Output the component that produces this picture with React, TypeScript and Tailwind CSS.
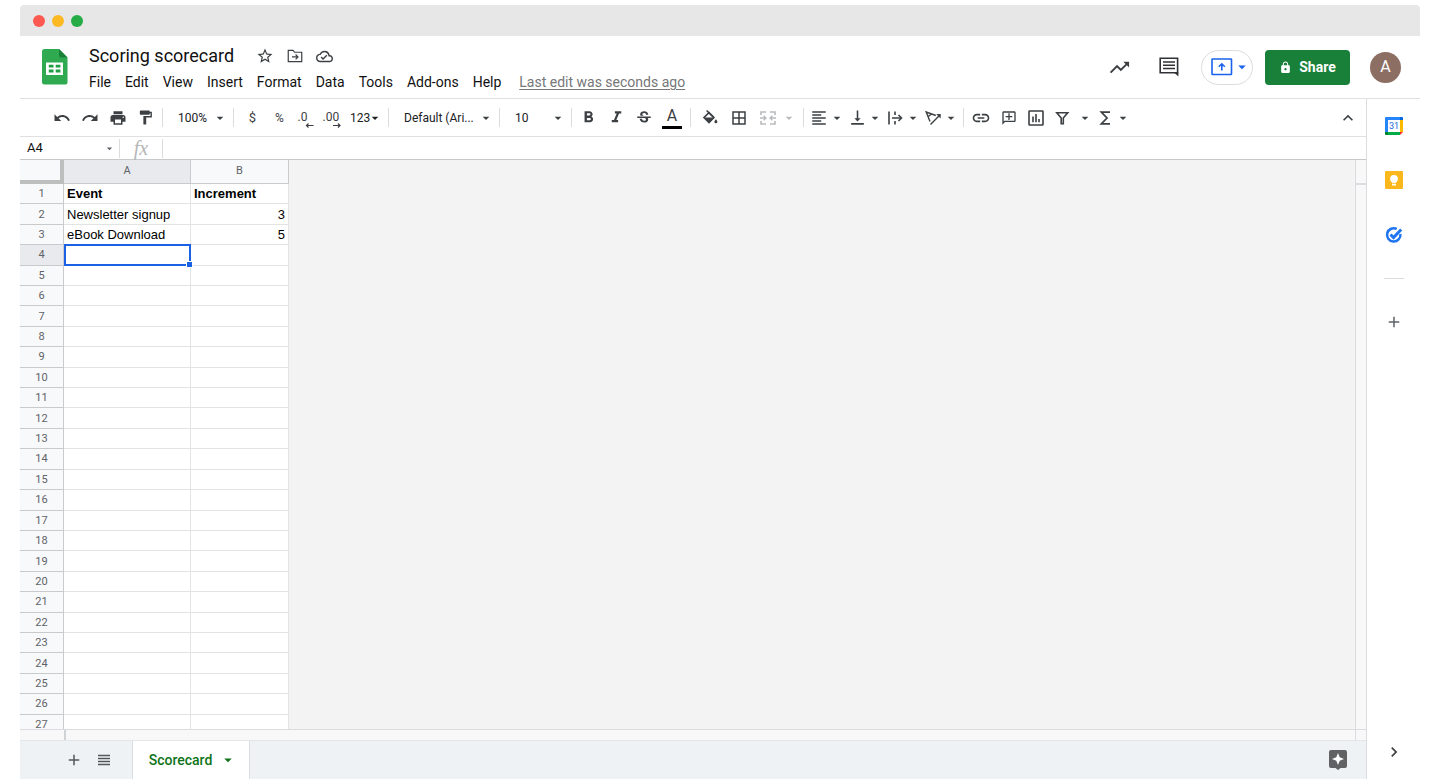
import React, { useState } from "react";
import {
  MdAdd,
  MdArrowDropDown,
  MdBorderAll,
  MdChevronRight,
  MdExpandLess,
  MdFormatAlignLeft,
  MdFormatBold,
  MdFormatItalic,
  MdFormatPaint,
  MdLink,
  MdLock,
  MdOutlineAddComment,
  MdOutlineCloudDone,
  MdPrint,
  MdRedo,
  MdStarBorder,
  MdStrikethroughS,
  MdTrendingUp,
  MdUndo,
  MdVerticalAlignBottom,
} from "react-icons/md";

const menus = ["File", "Edit", "View", "Insert", "Format", "Data", "Tools", "Add-ons", "Help"];

const cells: Record<number, [string, string]> = {
  1: ["Event", "Increment"],
  2: ["Newsletter signup", "3"],
  3: ["eBook Download", "5"],
};

const rows = Array.from({ length: 27 }, (_, i) => i + 1);
const selectedRow = 4;

const SheetsLogo = () => (
  <svg viewBox="0 0 26 36" className="h-9 w-[26px]" aria-hidden="true">
    <path d="M2.5 0H17l8.500 8.500v25a2 2 0 0 1-2 2h-21a2.500 2.500 0 0 1-2.500-2.500V2.500A2.500 2.500 0 0 1 2.500 0Z" fill="#2faa50" />
    <path d="M17 0l8.500 8.500h-6.500A2 2 0 0 1 17 6.500Z" fill="#188038" />
    <path d="M4 13.500h17v12.500H4Z" fill="#fff" />
    <path d="M6.800 15.800h4.700v2.800H6.800Zm6.900 0h4.700v2.800h-4.700ZM6.800 20.600h4.700v2.900H6.800Zm6.900 0h4.700v2.900h-4.700Z" fill="#1f9d44" />
  </svg>
);

const MoveIcon = () => (
  <svg viewBox="0 0 24 24" className="size-[18px]" fill="none" stroke="currentColor" strokeWidth="1.600" aria-hidden="true">
    <path d="M3 19.500V4.500h6.500l2 2.500H21v12.500Z" />
    <path d="M8 13.200h7.500M12.800 10l3.200 3.200-3.200 3.200" />
  </svg>
);

const CommentIcon = () => (
  <svg viewBox="0 0 20 20" className="size-5" fill="none" stroke="currentColor" strokeWidth="1.600" aria-hidden="true">
    <path d="M1.200 1.200h17.400v14.600H1.200Z" />
    <path d="M15 15.500h4.400V19.600Z" fill="currentColor" stroke="none" />
    <path d="M4 5h12M4 8.300h12M4 11.600h12" strokeWidth="1.500" />
  </svg>
);

const PresentIcon = () => (
  <svg viewBox="0 0 22 18" className="h-[18px] w-[22px]" fill="none" stroke="currentColor" aria-hidden="true">
    <rect x="1" y="1" width="19.500" height="15.500" rx="0.500" strokeWidth="1.600" />
    <path d="M10.800 12.500V6M7.800 8.800L10.800 5.800l3 3" strokeWidth="1.600" />
  </svg>
);

const FillIcon = () => (
  <svg viewBox="0 0 18 18" className="size-[18px]" aria-hidden="true">
    <path d="M5.600 1.500l6.600 6.400" fill="none" stroke="currentColor" strokeWidth="1.500" />
    <path d="M8 3.600l5 5L8 13.700 2.900 8.600Z" fill="none" stroke="currentColor" strokeWidth="1.500" />
    <path d="M2.600 8.500h10.700L8 13.900Z" fill="currentColor" />
    <path d="M14.900 10.200c.9 1.200 1.500 1.900 1.500 2.600a1.500 1.500 0 0 1-3 0c0-.7.6-1.400 1.500-2.600Z" fill="currentColor" />
  </svg>
);

const MergeIcon = () => (
  <svg viewBox="0 0 18 18" className="size-[18px]" fill="none" stroke="currentColor" strokeWidth="1.600" aria-hidden="true">
    <path d="M2 6V3h5M11 3h5v3M2 12v3h5M11 15h5v-3" />
    <path d="M1 9h5.500M4.700 6.800L6.900 9l-2.200 2.200M17 9h-5.500M13.300 6.800L11.100 9l2.200 2.200" strokeWidth="1.400" />
  </svg>
);

const WrapIcon = () => (
  <svg viewBox="0 0 18 18" className="size-[18px]" fill="none" stroke="currentColor" strokeWidth="1.600" aria-hidden="true">
    <path d="M3 2.500v13M9 2.500v3.500M9 12v3.500M6 9h9" />
    <path d="M12.500 6l3 3-3 3" />
  </svg>
);

const RotateIcon = () => (
  <svg viewBox="0 0 18 18" className="size-[18px]" fill="none" stroke="currentColor" strokeWidth="1.400" aria-hidden="true">
    <path d="M6 12.500L2.200 3l9.600 3.500M3.900 7.800L7.600 5" />
    <path d="M6.500 15.500L15.200 6.800" />
    <path d="M12.200 5h4.500v4.500Z" fill="currentColor" stroke="none" />
  </svg>
);

const ChartIcon = () => (
  <svg viewBox="0 0 18 18" className="size-[18px]" fill="none" stroke="currentColor" strokeWidth="1.600" aria-hidden="true">
    <rect x="2" y="2" width="14" height="14" rx="0.500" />
    <path d="M6 13.200V7.500M9 13.200V5M12 13.200V10" />
  </svg>
);

const FilterIcon = () => (
  <svg viewBox="0 0 18 18" className="size-[18px]" fill="none" stroke="currentColor" strokeWidth="1.600" aria-hidden="true">
    <path d="M3.800 3.800h10.900L10.300 9v5.800H8.200V9Z" />
  </svg>
);

const SigmaIcon = () => (
  <svg viewBox="0 0 18 18" className="size-[18px]" fill="none" stroke="currentColor" strokeWidth="1.700" aria-hidden="true">
    <path d="M14 3.200H5.300L11 9l-5.700 5.800H14" />
  </svg>
);

const SheetListIcon = () => (
  <svg viewBox="0 0 12 12" className="size-3" fill="none" stroke="currentColor" strokeWidth="1.700" aria-hidden="true">
    <path d="M0 1.500h12M0 4.500h12M0 7.500h12M0 10.500h12" />
  </svg>
);

const CalendarIcon = () => (
  <svg viewBox="0 0 18 18" className="size-[18px]" aria-hidden="true">
    <path d="M1 0h14v3H3v12H0V1a1 1 0 0 1 1-1Z" fill="#2684fc" />
    <path d="M15 0h2a1 1 0 0 1 1 1v2h-3Z" fill="#0066da" />
    <path d="M15 3h3v12h-3Z" fill="#ffba00" />
    <path d="M3 15h12v3H3Z" fill="#00ac47" />
    <path d="M0 15h3v3H1a1 1 0 0 1-1-1Z" fill="#00832d" />
    <path d="M15 15h3l-3 3Z" fill="#fe2c25" />
    <path d="M3 3h12v12H3Z" fill="#fff" />
    <text x="9" y="12.200" textAnchor="middle" fontSize="9" fontFamily="Roboto, sans-serif" fill="#2068dc">
      31
    </text>
  </svg>
);

const KeepIcon = () => (
  <svg viewBox="0 0 18 18" className="size-[18px]" aria-hidden="true">
    <rect width="18" height="18" rx="1" fill="#fbb81c" />
    <circle cx="9" cy="7.800" r="3.900" fill="#fff" />
    <path d="M7 9h4v2.800H7ZM7 12.700h4v1.800H7Z" fill="#fff" />
  </svg>
);

const TasksIcon = () => (
  <svg viewBox="0 0 18 18" className="size-[18px]" fill="none" aria-hidden="true">
    <path d="M11.800 2.900A6.700 6.700 0 1 0 15.400 8" stroke="#1f74f0" strokeWidth="2.500" />
    <path d="M5.500 8.500l3 3 7.700-8" stroke="#1f74f0" strokeWidth="3" />
  </svg>
);

const ExploreIcon = () => (
  <svg viewBox="0 0 18 20" className="h-5 w-[18px]" aria-hidden="true">
    <path d="M2 0h14a2 2 0 0 1 2 2v14a2 2 0 0 1-2 2h-4.500L9 20l-2.500-2H2a2 2 0 0 1-2-2V2a2 2 0 0 1 2-2Z" fill="#606264" />
    <path d="M9 3l1.700 4.300L15 9l-4.300 1.700L9 15l-1.700-4.300L3 9l4.300-1.700Z" fill="#fff" />
  </svg>
);

const Divider = () => <span className="h-[19px] w-px shrink-0 bg-[#dadce0]" />;

const Caret = () => <MdArrowDropDown className="size-4 shrink-0" />;

interface ToolProps {
  label: string;
  className?: string;
  children: React.ReactNode;
}

const Tool: React.FC<ToolProps> = ({ label, className = "w-7", children }) => (
  <button aria-label={label} className={`flex h-7 shrink-0 items-center justify-center ${className}`}>
    {children}
  </button>
);

const MenuTool: React.FC<ToolProps> = ({ label, className = "w-[38px]", children }) => (
  <button aria-label={label} className={`flex h-7 shrink-0 items-center justify-between pl-[3px] ${className}`}>
    {children}
    <Caret />
  </button>
);

interface PickerProps {
  label: string;
  options: string[];
  className: string;
}

const Picker: React.FC<PickerProps> = ({ label, options, className }) => (
  <div className={`relative flex h-7 shrink-0 items-center ${className}`}>
    <select aria-label={label} className="w-full appearance-none bg-transparent pl-[15px] text-xs text-[#202124] outline-none">
      {options.map((option) => (
        <option key={option}>{option}</option>
      ))}
    </select>
    <MdArrowDropDown className="pointer-events-none absolute right-[5px] size-4" />
  </div>
);

const TitleBar = () => (
  <div className="flex h-[31px] shrink-0 items-center gap-[7px] rounded-t-sm bg-[#e7e7e7] pl-[13px]">
    <span className="size-3 rounded-full bg-[#ff5a52]" />
    <span className="size-3 rounded-full bg-[#fdb924]" />
    <span className="size-3 rounded-full bg-[#25ac47]" />
  </div>
);

const Header = () => {
  const [title, setTitle] = useState("Scoring scorecard");

  return (
    <header className="flex h-[63px] shrink-0 items-center border-b border-[#e0e0e0] pr-[19px] pl-[22px]">
      <SheetsLogo />
      <div className="ml-[21px] flex flex-col pt-[2px]">
        <div className="flex h-7 items-center text-[#3c4043]">
          <input
            aria-label="Document name"
            value={title}
            onChange={(e) => setTitle(e.target.value)}
            className="w-[150px] text-lg text-[#111] outline-none"
          />
          <div className="ml-[17px] flex items-center gap-3">
            <button aria-label="Star"><MdStarBorder className="size-[18px]" /></button>
            <button aria-label="Move"><MoveIcon /></button>
            <button aria-label="Saved to drive"><MdOutlineCloudDone className="size-[17px]" /></button>
          </div>
        </div>
        <nav className="flex h-6 items-center gap-[14px] text-sm text-[#111]">
          {menus.map((menu) => (
            <button key={menu}>{menu}</button>
          ))}
          <a href="#history" className="ml-1 text-[#757779] underline underline-offset-2">
            Last edit was seconds ago
          </a>
        </nav>
      </div>
      <div className="ml-auto flex items-center">
        <button aria-label="Activity" className="mr-7 text-[#3c4043]"><MdTrendingUp className="size-[23px]" /></button>
        <button aria-label="Comments" className="mr-[22px] text-[#303235]">
          <CommentIcon />
        </button>
        <button
          aria-label="Present"
          className="mr-3 flex h-[35px] w-[52px] items-center justify-end border border-[#dadce0] pr-px text-[#1a62ee] rounded-full"
        >
          <PresentIcon />
          <MdArrowDropDown className="size-[18px]" />
        </button>
        <button className="mr-5 flex h-[35px] w-[85px] items-center justify-center gap-[7px] rounded bg-[#188038] text-sm font-bold text-white">
          <MdLock className="size-[13px]" />
          Share
        </button>
        <button aria-label="Account" className="size-[31px] rounded-full bg-[#8d6e63] text-base text-white">
          A
        </button>
      </div>
    </header>
  );
};

const Toolbar = () => (
  <div className="flex h-[38px] shrink-0 items-center border-b border-[#e0e0e0] pr-2 pl-7 text-[13px] text-[#3c4043]">
    <Tool label="Undo"><MdUndo className="size-[18px]" /></Tool>
    <Tool label="Redo"><MdRedo className="size-[18px]" /></Tool>
    <Tool label="Print" className="w-[27px]"><MdPrint className="size-[18px]" /></Tool>
    <Tool label="Paint format" className="mr-[3px] w-7"><MdFormatPaint className="size-[17px]" /></Tool>
    <Divider />
    <Picker label="Zoom" options={["100%", "75%", "50%"]} className="w-[70px]" />
    <Divider />
    <Tool label="Currency" className="ml-[5px] w-[27px]">$</Tool>
    <Tool label="Percent" className="w-[27px] text-xs">%</Tool>
    <Tool label="Decrease decimals" className="w-[25px]">
      <span className="flex flex-col items-start pt-[3px] text-xs leading-3">
        .0
        <svg viewBox="0 0 16 5" className="h-[5px] w-4" fill="none" stroke="currentColor" aria-hidden="true">
          <path d="M8 2.500h7.500M10.500 0.500l-2 2 2 2" strokeWidth="1.200" />
        </svg>
      </span>
    </Tool>
    <Tool label="Increase decimals" className="mr-[2px] w-[27px]">
      <span className="flex flex-col items-start pt-[3px] text-xs leading-3">
        .00
        <svg viewBox="0 0 18 5" className="h-[5px] w-[18px]" fill="none" stroke="currentColor" aria-hidden="true">
          <path d="M10 2.500h7.500M15 0.500l2 2-2 2" strokeWidth="1.200" />
        </svg>
      </span>
    </Tool>
    <button className="flex h-7 w-[41px] shrink-0 items-center pl-[3px] text-xs text-[#202124]">
      123
      <MdArrowDropDown className="-ml-[3px] size-4" />
    </button>
    <Divider />
    <Picker label="Font" options={["Default (Ari...", "Roboto"]} className="w-[110px]" />
    <Divider />
    <Picker label="Font size" options={["10", "11", "12"]} className="w-[71px]" />
    <Divider />
    <Tool label="Bold" className="ml-[2px] w-7"><MdFormatBold className="size-[19px]" /></Tool>
    <Tool label="Italic"><MdFormatItalic className="size-[19px]" /></Tool>
    <Tool label="Strikethrough"><MdStrikethroughS className="size-[18px]" /></Tool>
    <Tool label="Text color" className="mr-[4px] w-7">
      <span className="w-5 border-b-[3px] border-black text-base leading-5">A</span>
    </Tool>
    <Divider />
    <Tool label="Fill color" className="ml-[4px] w-[29px]"><FillIcon /></Tool>
    <Tool label="Borders" className="w-[29px]"><MdBorderAll className="size-[18px]" /></Tool>
    <button aria-label="Merge cells" className="mr-[2px] flex w-[48px] shrink-0 items-center gap-[4px] pl-[6px] text-[#b9bbbd]">
      <MergeIcon />
      <Caret />
    </button>
    <Divider />
    <MenuTool label="Horizontal align" className="ml-[3px] w-[38px]"><MdFormatAlignLeft className="size-[18px]" /></MenuTool>
    <MenuTool label="Vertical align"><MdVerticalAlignBottom className="size-[19px]" /></MenuTool>
    <MenuTool label="Text wrapping"><WrapIcon /></MenuTool>
    <MenuTool label="Text rotation" className="mr-[4px] w-[38px]"><RotateIcon /></MenuTool>
    <Divider />
    <Tool label="Insert link" className="ml-[3px] w-7"><MdLink className="size-5" /></Tool>
    <Tool label="Insert comment" className="w-[27px]"><MdOutlineAddComment className="size-4 -scale-x-100" /></Tool>
    <Tool label="Insert chart"><ChartIcon /></Tool>
    <MenuTool label="Filter" className="w-[43px]"><FilterIcon /></MenuTool>
    <MenuTool label="Functions"><SigmaIcon /></MenuTool>
    <Tool label="Hide menus" className="ml-auto w-5"><MdExpandLess className="size-5" /></Tool>
  </div>
);

const FormulaBar = () => {
  const [formula, setFormula] = useState("");

  return (
    <div className="flex h-[23px] shrink-0 items-center border-b border-[#c6c8ca] text-[#5f6368]">
      <input aria-label="Name box" defaultValue="A4" className="w-20 pl-[7px] text-[13px] text-[#111] outline-none" />
      <button aria-label="Named ranges" className="ml-[3px] flex w-4 items-center">
        <MdArrowDropDown className="size-[13px]" />
      </button>
      <Divider />
      <label htmlFor="formula" className="w-[42px] text-center font-['Liberation_Serif',serif] text-xl leading-5 text-[#b4b6b8] italic">
        fx
      </label>
      <Divider />
      <input
        id="formula"
        value={formula}
        onChange={(e) => setFormula(e.target.value)}
        className="min-w-0 flex-1 px-2 text-[13px] outline-none"
      />
    </div>
  );
};

const Grid = () => (
  <div className="min-h-0 flex-1 overflow-hidden bg-[#f3f3f3]">
    <table className="h-[575px] w-[269px] table-fixed border-separate border-spacing-0 bg-white font-['Liberation_Sans',Arial,sans-serif] text-[13px] text-black">
      <colgroup>
        <col className="w-11" />
        <col className="w-[127px]" />
        <col className="w-[98px]" />
      </colgroup>
      <thead>
        <tr className="h-6 font-['Roboto',sans-serif] text-[11px] text-[#5f6368]">
          <td className="border-r-4 border-b-4 border-[#bdbfbf] bg-[#f8f9fa] p-0" />
          <th scope="col" className="border-r border-b border-[#c8cacc] bg-[#e8eaed] p-0 font-normal">A</th>
          <th scope="col" className="border-r border-b border-[#c8cacc] bg-[#f8f9fa] p-0 font-normal">B</th>
        </tr>
      </thead>
      <tbody>
        {rows.map((row) => {
          const [event, increment] = cells[row] ?? ["", ""];
          const selected = row === selectedRow;
          return (
            <tr key={row} className={row === 1 ? "font-bold" : ""}>
              <th
                scope="row"
                className={`border-r border-b border-[#c8cacc] p-0 font-['Roboto',sans-serif] text-[11px] leading-[19px] font-normal text-[#5f6368] ${
                  selected ? "bg-[#e8eaed]" : "bg-[#f8f9fa]"
                }`}
              >
                {row}
              </th>
              <td className="relative border-r border-b border-[#e2e3e3] px-[3px] py-0 leading-[19px] whitespace-nowrap">
                {event}
                {selected && (
                  <>
                    <span className="absolute -inset-px left-0 border-2 border-[#1b61e4]" />
                    <span className="absolute -right-[3px] -bottom-[3px] z-10 size-[7px] border border-white bg-[#1b61e4]" />
                  </>
                )}
              </td>
              <td className={`border-r border-b border-[#e2e3e3] px-[3px] py-0 leading-[19px] ${row === 1 ? "" : "text-right"}`}>
                {increment}
              </td>
            </tr>
          );
        })}
      </tbody>
    </table>
  </div>
);

const SheetTabs = () => (
  <footer className="flex h-[39px] shrink-0 items-stretch border-t border-[#e4e7e9] bg-[#eef2f4] text-[#55585b]">
    <button aria-label="Add sheet" className="ml-[45px] w-[18px]"><MdAdd className="size-[18px]" /></button>
    <button aria-label="All sheets" className="ml-3 flex w-[18px] items-center justify-center"><SheetListIcon /></button>
    <button className="ml-[19px] flex w-[118px] items-center justify-center border-x border-[#dcdfe1] bg-white pl-1 text-sm font-medium text-[#0f7418]">
      Scorecard
      <MdArrowDropDown className="ml-[7px] size-[18px]" />
    </button>
    <button aria-label="Explore" className="mr-[19px] ml-auto"><ExploreIcon /></button>
  </footer>
);

const SidePanel = () => (
  <aside className="flex w-[54px] shrink-0 flex-col items-center border-l border-[#dadce0] pt-[18px] pb-[17px] text-[#5f6368]">
    <button aria-label="Calendar"><CalendarIcon /></button>
    <button aria-label="Keep" className="mt-9"><KeepIcon /></button>
    <button aria-label="Tasks" className="mt-[37px]"><TasksIcon /></button>
    <span className="mt-[34px] h-px w-5 bg-[#dadce0]" />
    <button aria-label="Get add-ons" className="mt-[34px]"><MdAdd className="size-[18px]" /></button>
    <button aria-label="Hide side panel" className="mt-auto text-[#3c4043]"><MdChevronRight className="size-5" /></button>
  </aside>
);

export default function App() {
  return (
    <div className="flex h-screen flex-col bg-white px-5 py-[5px] font-['Roboto',sans-serif]">
      <TitleBar />
      <Header />
      <div className="flex min-h-0 flex-1">
        <main className="flex min-w-0 flex-1 flex-col">
          <Toolbar />
          <FormulaBar />
          <div className="flex min-h-0 flex-1">
            <Grid />
            <div className="w-[11px] shrink-0 border-l border-[#dadce0] bg-[#f8f8f8]">
              <div className="h-[25px] border-b-2 border-[#dadce0]" />
            </div>
          </div>
          <div className="flex h-[11px] shrink-0 border-t border-[#dadce0] bg-[#f8f8f8]">
            <div className="w-[46px] border-r-2 border-[#d0d3d5]" />
            <div className="mr-[10px] flex-1 border-r border-[#dadce0]" />
          </div>
          <SheetTabs />
        </main>
        <SidePanel />
      </div>
    </div>
  );
}
